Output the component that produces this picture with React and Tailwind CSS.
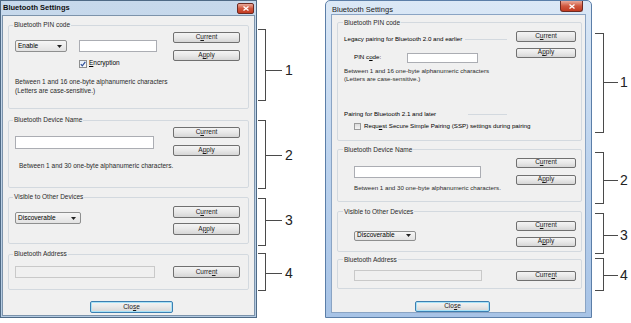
import React from "react";

const font = "font-['Liberation_Sans',Arial,sans-serif]";

const Btn = ({ children, className = "", focus = false }) => (
  <div
    className={`flex items-center justify-center rounded-[2px] border ${
      focus ? "border-[#3c7fb1] shadow-[inset_0_0_0_1px_#a8e2f7]" : "border-[#707070]"
    } bg-linear-to-b from-[#f4f4f4] via-[#e8e8e8] to-[#d6d6d6] text-[6.5px] leading-none text-[#1a1a1a] ${className}`}
  >
    {children}
  </div>
);

const U = ({ children }) => <span className="underline underline-offset-[1px]">{children}</span>;

const Group = ({ label, className = "", legend = "ml-[4px]", children }) => (
  <fieldset className={`m-0 min-w-0 border border-[#d3d9df] rounded-[2px] ${className}`}>
    <legend className={`${legend} px-[1px] text-[6.5px] leading-[8px] text-[#2a2a2a]`}>{label}</legend>
    <div className="flex">{children}</div>
  </fieldset>
);

const Select = ({ label, className = "" }) => (
  <div
    className={`flex items-center justify-between border border-[#8e8f8f] rounded-[2px] bg-linear-to-b from-[#f6f6f6] to-[#e2e2e2] pl-[2px] pr-[4px] text-[6.5px] leading-none ${className}`}
  >
    <span>{label}</span>
    <svg width="5" height="3" viewBox="0 0 5 3">
      <path d="M0 0H5L2.5 3Z" fill="#222" />
    </svg>
  </div>
);

const Field = ({ className = "", disabled = false }) => (
  <div
    className={`border ${disabled ? "border-[#c9c9c9] bg-[#f0f0f0]" : "border-[#abadb3] bg-white"} ${className}`}
  />
);

const CloseX = ({ className = "" }) => (
  <div
    className={`flex items-center justify-center border border-[#6d2a22] bg-linear-to-b from-[#e9a99a] via-[#d0583f] to-[#c33a20] ${className}`}
  >
    <svg width="6" height="5" viewBox="0 0 6 5">
      <path d="M0.5 0.5L5.5 4.5M5.5 0.5L0.5 4.5" stroke="#fff" strokeWidth="1.3" />
    </svg>
  </div>
);

function Bracket({ box, spacer, n, lineW, boxW, numMl }) {
  return (
    <div className={`flex ${box}`}>
      <div className={`${boxW} border-y border-r border-[#4a4a4a]`} />
      <div className="flex flex-col">
        <div className={spacer} />
        <div className="flex items-center h-[14px]">
          <div className={`h-px bg-[#4a4a4a] ${lineW}`} />
          <span className={`${numMl} text-[14px] leading-none text-[#222]`}>{n}</span>
        </div>
      </div>
    </div>
  );
}

function LeftDialog() {
  return (
    <div className="w-[257px] h-[318px] shrink-0 border border-[#4f6a86] bg-linear-to-b from-[#c7d9ec] to-[#b4cbe2] flex flex-col">
      <div className="h-[14px] flex items-center justify-between pl-[2px] pr-[2px]">
        <span className="text-[7.5px] font-bold leading-none text-[#111]">Bluetooth Settings</span>
        <CloseX className="w-[17px] h-[11px] rounded-[2px] mt-[1px]" />
      </div>
      <div className="flex-1 ml-[1px] mr-[1px] mb-[1px] border border-[#7c93ab] bg-[#f0f0f0] flex flex-col pl-[5px]">
        <Group label="Bluetooth PIN code" className="w-[241px] h-[88px] mt-[5px]">
          <div className="flex-1 pl-[6px]">
            <div className="flex mt-[11px]">
              <Select label="Enable" className="w-[52px] h-[12px]" />
              <Field className="ml-[12px] w-[78px] h-[12px]" />
            </div>
            <div className="flex items-center mt-[7px] ml-[64px] h-[9px]">
              <div className="w-[8px] h-[8px] border border-[#8e8f8f] bg-linear-to-b from-[#e8f1fa] to-[#f7f7f7] flex items-center justify-center">
                <svg width="6" height="6" viewBox="0 0 6 6">
                  <path d="M0.8 3.2L2.3 4.8L5.3 0.8" stroke="#2f4f9a" strokeWidth="1.2" fill="none" />
                </svg>
              </div>
              <span className="ml-[2px] text-[6.5px] leading-none">
                <U>E</U>ncryption
              </span>
            </div>
            <div className="mt-[9px] text-[6.5px] leading-[9px] whitespace-nowrap text-[#2a2a2a]">
              Between 1 and 16 one-byte alphanumeric characters
              <br />
              (Letters are case-sensitive.)
            </div>
          </div>
          <div className="w-[67px] mr-[8px] pt-[3px]">
            <Btn className="h-[11px]">
              C<U>u</U>rrent
            </Btn>
            <Btn className="h-[11px] mt-[7px]">
              A<U>p</U>ply
            </Btn>
          </div>
        </Group>

        <Group label="Bluetooth Device Name" className="w-[241px] h-[72px] mt-[7px]">
          <div className="flex-1 min-w-0 pl-[6px]">
            <Field className="mt-[12px] w-[139px] h-[13px]" />
            <div className="mt-[13px] pl-[4px] text-[6.5px] leading-[8px] whitespace-nowrap text-[#2a2a2a]">
              Between 1 and 30 one-byte alphanumeric characters.
            </div>
          </div>
          <div className="w-[67px] shrink-0 mr-[8px] pt-[3px]">
            <Btn className="h-[11px]">
              C<U>u</U>rrent
            </Btn>
            <Btn className="h-[11px] mt-[7px]">
              A<U>p</U>ply
            </Btn>
          </div>
        </Group>

        <Group label="Visible to Other Devices" className="w-[241px] h-[51px] mt-[5px]">
          <div className="flex-1 pl-[6px]">
            <Select label="Discoverable" className="mt-[11px] w-[66px] h-[12px]" />
          </div>
          <div className="w-[67px] mr-[8px] pt-[5px]">
            <Btn className="h-[12px]">
              C<U>u</U>rrent
            </Btn>
            <Btn className="h-[12px] mt-[5px]">
              A<U>p</U>ply
            </Btn>
          </div>
        </Group>

        <Group label="Bluetooth Address" className="w-[241px] h-[40px] mt-[6px]">
          <div className="flex-1 pl-[6px]">
            <Field disabled className="mt-[8px] w-[140px] h-[12px]" />
          </div>
          <div className="w-[67px] mr-[8px] pt-[8px]">
            <Btn className="h-[12px]">
              Curre<U>n</U>t
            </Btn>
          </div>
        </Group>

        <Btn focus className="w-[83px] h-[12px] mt-[11px] ml-[82px]">
          Clo<U>s</U>e
        </Btn>
      </div>
    </div>
  );
}

function RightDialog() {
  return (
    <div className="w-[267px] h-[318px] shrink-0 rounded-t-[5px] border border-[#5b7ea8] bg-linear-to-b from-[#dbe8f6] via-[#bcd3ee] to-[#a7c3e6] flex flex-col">
      <div className="h-[15px] flex items-start justify-between pl-[6px] pr-[8px]">
        <span className="mt-[5px] text-[7.5px] leading-none text-[#1b1b1b]">Bluetooth Settings</span>
        <CloseX className="w-[23px] h-[11px] rounded-b-[3px] border-t-0" />
      </div>
      <div className="flex-1 mx-[5px] mb-[5px] border border-[#8aa4c4] bg-[#f0f0f0] flex flex-col pl-[5px]">
        <Group label="Bluetooth PIN code" legend="ml-[5px]" className="w-[245px] h-[122px] mt-[4px]">
          <div className="w-[169px] pl-[6px]">
            <div className="flex items-center mt-[9px] h-[8px]">
              <span className="text-[6.2px] leading-none whitespace-nowrap">
                Legacy pairing for Bluetooth 2.0 and earlier
              </span>
              <div className="flex-1 ml-[3px] border-t border-[#d3d9df]" />
            </div>
            <div className="flex items-center mt-[9px] h-[10px] pl-[10px]">
              <span className="w-[53px] text-[6.2px] leading-none">
                PIN c<U>o</U>de:
              </span>
              <Field className="w-[71px] h-[10px]" />
            </div>
            <div className="mt-[4px] text-[6.2px] leading-[8px] whitespace-nowrap text-[#2a2a2a]">
              Between 1 and 16 one-byte alphanumeric characters
              <br />
              (Letters are case-sensitive.)
            </div>
            <div className="flex items-center mt-[28px] h-[8px]">
              <span className="text-[6.2px] leading-none whitespace-nowrap">
                Pairing for Bluetooth 2.1 and later
              </span>
              <div className="flex-1 ml-[32px] border-t border-[#d3d9df]" />
            </div>
            <div className="flex items-center mt-[4px] h-[8px] pl-[10px]">
              <div className="w-[7px] h-[7px] shrink-0 border border-[#9a9a9a] bg-linear-to-b from-[#dcdcdc] to-[#f4f4f4]" />
              <span className="ml-[3px] text-[6.2px] leading-none whitespace-nowrap">
                Requ<U>e</U>st Secure Simple Pairing (SSP) settings during pairing
              </span>
            </div>
          </div>
          <div className="w-[60px] ml-[9px] pt-[4px]">
            <Btn className="h-[11px]">
              C<U>u</U>rrent
            </Btn>
            <Btn className="h-[10px] mt-[6px]">
              A<U>p</U>ply
            </Btn>
          </div>
        </Group>

        <Group label="Bluetooth Device Name" legend="ml-[5px]" className="w-[245px] h-[56px] mt-[5px]">
          <div className="w-[169px] pl-[16px]">
            <Field className="mt-[12px] w-[127px] h-[12px]" />
            <div className="mt-[6px] text-[6.2px] leading-[8px] whitespace-nowrap text-[#2a2a2a]">
              Between 1 and 30 one-byte alphanumeric characters.
            </div>
          </div>
          <div className="w-[60px] ml-[9px] pt-[4px]">
            <Btn className="h-[10px]">
              C<U>u</U>rrent
            </Btn>
            <Btn className="h-[10px] mt-[7px]">
              A<U>p</U>ply
            </Btn>
          </div>
        </Group>

        <Group label="Visible to Other Devices" legend="ml-[5px]" className="w-[245px] h-[44px] mt-[6px]">
          <div className="w-[169px] pl-[16px]">
            <Select label="Discoverable" className="mt-[15px] w-[62px] h-[10px]" />
          </div>
          <div className="w-[60px] ml-[9px] pt-[5px]">
            <Btn className="h-[10px]">
              C<U>u</U>rrent
            </Btn>
            <Btn className="h-[10px] mt-[6px]">
              A<U>p</U>ply
            </Btn>
          </div>
        </Group>

        <Group label="Bluetooth Address" legend="ml-[5px]" className="w-[245px] h-[33px] mt-[4px]">
          <div className="w-[169px] pl-[16px]">
            <Field disabled className="mt-[6px] w-[128px] h-[11px]" />
          </div>
          <div className="w-[60px] ml-[9px] pt-[7px]">
            <Btn className="h-[10px]">
              Curre<U>n</U>t
            </Btn>
          </div>
        </Group>

        <Btn focus className="w-[75px] h-[11px] mt-[12px] ml-[78px]">
          Clo<U>s</U>e
        </Btn>
      </div>
    </div>
  );
}

export default function App() {
  return (
    <div className={`w-[631px] h-[323px] bg-white flex overflow-hidden ${font}`}>
      <LeftDialog />
      <div className="w-[68px] shrink-0 flex flex-col pl-[1px]">
        <Bracket box="h-[72px] mt-[29px]" spacer="h-[34px]" n="1" boxW="w-[8px]" lineW="w-[16px]" numMl="ml-[3px]" />
        <Bracket box="h-[69px] mt-[19px]" spacer="h-[28px]" n="2" boxW="w-[8px]" lineW="w-[16px]" numMl="ml-[3px]" />
        <Bracket box="h-[48px] mt-[9px]" spacer="h-[15px]" n="3" boxW="w-[8px]" lineW="w-[16px]" numMl="ml-[3px]" />
        <Bracket box="h-[38px] mt-[7px]" spacer="h-[13px]" n="4" boxW="w-[8px]" lineW="w-[16px]" numMl="ml-[3px]" />
      </div>
      <RightDialog />
      <div className="flex-1 flex flex-col pl-[3px]">
        <Bracket box="h-[100px] mt-[33px]" spacer="h-[42px]" n="1" boxW="w-[9px]" lineW="w-[14px]" numMl="ml-[2px]" />
        <Bracket box="h-[52px] mt-[19px]" spacer="h-[21px]" n="2" boxW="w-[9px]" lineW="w-[14px]" numMl="ml-[2px]" />
        <Bracket box="h-[41px] mt-[9px]" spacer="h-[15px]" n="3" boxW="w-[9px]" lineW="w-[14px]" numMl="ml-[2px]" />
        <Bracket box="h-[33px] mt-[4px]" spacer="h-[10px]" n="4" boxW="w-[9px]" lineW="w-[14px]" numMl="ml-[2px]" />
      </div>
    </div>
  );
}
